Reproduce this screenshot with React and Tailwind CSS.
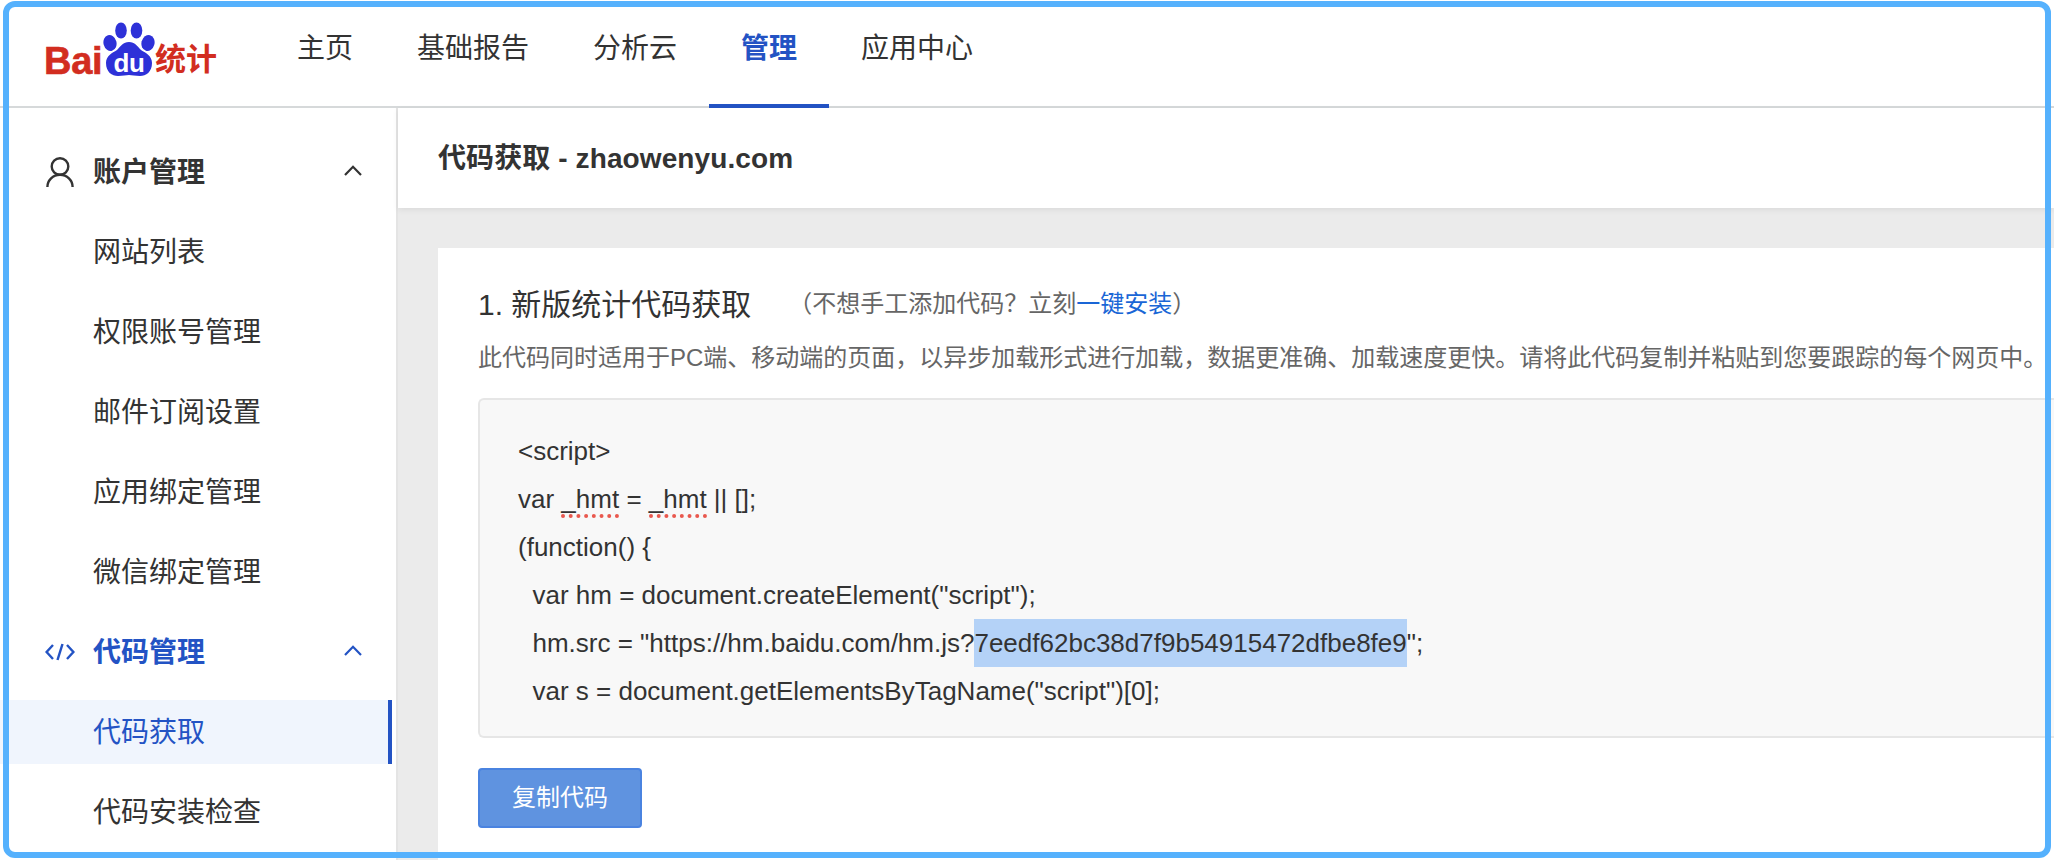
function Logo() {
  return (
    <div className="flex items-end w-[173px] h-[54px] ml-[44px] mt-[22px] shrink-0 text-[#d22d20] font-bold">
      <span className="text-[38px] leading-[30px] tracking-[-0.3px] w-[60px] h-[30px] [-webkit-text-stroke:0.6px_#d22d20]">Bai</span>
      <div className="relative w-[52px] h-[54px] shrink-0">
        <svg viewBox="0 0 52 54" className="w-[52px] h-[54px] block" fill="#2e31d8">
          <ellipse cx="7" cy="21" rx="6.5" ry="8" transform="rotate(-15 7 21)" />
          <ellipse cx="18" cy="8.5" rx="5.8" ry="8" />
          <ellipse cx="33.5" cy="8.5" rx="5.8" ry="8" />
          <ellipse cx="45" cy="21" rx="6.5" ry="8" transform="rotate(15 45 21)" />
          <path d="M26 20c6 0 8 4 12 8 5 3 11 6 11 13 0 9-6 13-12 13-5 0-8-1-11-1s-6 1-11 1c-6 0-12-4-12-13 0-7 6-10 11-13 4-4 6-8 12-8z" />
        </svg>
        <span className="absolute left-[4px] top-[31px] w-[44px] text-center text-white text-[26px] leading-[20px] tracking-[-0.5px]">du</span>
      </div>
      <span className="text-[31px] leading-[30px] mb-[1px] whitespace-nowrap">统计</span>
    </div>
  );
}

function Chevron({ color }) {
  return (
    <svg width="18" height="11" viewBox="0 0 18 11" fill="none" stroke={color} strokeWidth="2.2" className="shrink-0 mb-[3px]">
      <path d="M1 10 L9 1.8 L17 10" />
    </svg>
  );
}

function Person() {
  return (
    <svg width="28" height="32" viewBox="0 0 28 32" fill="none" stroke="#333" strokeWidth="2.4" className="ml-[1px]">
      <circle cx="14" cy="10.5" r="8.3" />
      <path d="M1.4 31c0-7 5.6-12.2 12.6-12.2S26.6 24 26.6 31" />
    </svg>
  );
}

function CodeIcon() {
  return (
    <svg width="30" height="18" viewBox="0 0 30 18" fill="none" stroke="#2353c4" strokeWidth="2.4">
      <path d="M8 2 L1.6 9 L8 16" />
      <path d="M22 2 L28.4 9 L22 16" />
      <path d="M17.5 1 L12.5 17" />
    </svg>
  );
}

function Section({ icon, label, active }) {
  return (
    <div className={`flex items-center h-16 mb-4 mr-1 pl-[45px] pr-[30px] text-[28px] font-bold ${active ? "text-[#2353c4]" : "text-[#333]"}`}>
      <span className="w-[48px] shrink-0 flex">{icon}</span>
      <span className="flex-1 pt-[2px]">{label}</span>
      <Chevron color={active ? "#2353c4" : "#333"} />
    </div>
  );
}

function Item({ label, active }) {
  return (
    <div className={`flex items-center h-16 mb-4 mr-1 pl-[93px] pt-[2px] text-[28px] ${active ? "bg-[#f0f5fd] text-[#2353c4] border-r-4 border-[#2353c4]" : "text-[#333]"}`}>
      {label}
    </div>
  );
}

function Nav({ label, active }) {
  return (
    <div className={`px-8 h-[108px] pt-[29px] text-[28px] leading-[40px] border-b-4 ${active ? "border-[#2353c4] text-[#2353c4] font-bold" : "border-transparent text-[#333]"}`}>
      {label}
    </div>
  );
}

function Spell({ children }) {
  return <span className="border-b-[4px] border-dotted border-[#e9584e]">{children}</span>;
}

export default function App() {
  return (
    <div className="relative h-[860px] w-full overflow-hidden bg-white font-['Liberation_Sans','Noto_Sans_CJK_SC',sans-serif]">
      <header className="flex h-[108px] border-b-2 border-[#d6d9da] bg-white">
        <Logo />
        <nav className="flex ml-[48px] h-[108px]">
          <Nav label="主页" />
          <Nav label="基础报告" />
          <Nav label="分析云" />
          <Nav label="管理" active />
          <Nav label="应用中心" />
        </nav>
      </header>
      <div className="flex h-[752px]">
        <aside className="w-[398px] shrink-0 border-r-2 border-[#e4e4e4] bg-white pt-8">
          <Section icon={<Person />} label="账户管理" />
          <Item label="网站列表" />
          <Item label="权限账号管理" />
          <Item label="邮件订阅设置" />
          <Item label="应用绑定管理" />
          <Item label="微信绑定管理" />
          <Section icon={<CodeIcon />} label="代码管理" active />
          <Item label="代码获取" active />
          <Item label="代码安装检查" />
        </aside>
        <main className="flex-1 min-w-0 bg-[#ebebeb]">
          <div className="flex items-center h-[100px] pl-[40px] pt-[2px] bg-white text-[28px] tracking-[0.1px] font-bold text-[#333] shadow-[0_2px_6px_rgba(0,0,0,0.07)]">
            代码获取 - zhaowenyu.com
          </div>
          <section className="ml-[40px] mt-[40px] h-[612px] bg-white pl-[40px] pt-[33px]">
            <div className="flex items-center h-[46px]">
              <span className="text-[30px] text-[#333]">1. 新版统计代码获取</span>
              <span className="ml-[37px] text-[24px] text-[#666]">（不想手工添加代码？立刻<span className="text-[#1a66d6]">一键安装</span>）</span>
            </div>
            <p className="mt-[13px] text-[24px] leading-[36px] text-[#666] whitespace-nowrap">
              此代码同时适用于PC端、移动端的页面，以异步加载形式进行加载，数据更准确、加载速度更快。请将此代码复制并粘贴到您要跟踪的每个网页中。
            </p>
            <pre className="mt-[22px] h-[340px] border-2 border-r-0 border-[#e6e6e6] rounded-l-[6px] bg-[#f8f8f8] pl-[38px] pt-[27px] text-[26px] leading-[48px] text-[#333] font-['Liberation_Sans','Noto_Sans_CJK_SC',sans-serif]">
              <div>{"<script>"}</div>
              <div>var <Spell>_hmt</Spell> = <Spell>_hmt</Spell> || [];</div>
              <div>{"(function() {"}</div>
              <div>{"  var hm = document.createElement(\"script\");"}</div>
              <div>{"  hm.src = \"https://hm.baidu.com/hm.js?"}<span className="bg-[#b4d2f7] inline-block h-[48px] align-top">7eedf62bc38d7f9b54915472dfbe8fe9</span>{"\";"}</div>
              <div>{"  var s = document.getElementsByTagName(\"script\")[0];"}</div>
            </pre>
            <button className="mt-[30px] w-[164px] h-[60px] rounded-[4px] border-2 border-[#4a83e0] bg-[#5f93e0] text-[24px] text-white">复制代码</button>
          </section>
        </main>
      </div>
      <div className="absolute left-[3px] top-[1px] w-[2048px] h-[857px] rounded-[12px] border-[6px] border-[#55b1fd] pointer-events-none" />
    </div>
  );
}
